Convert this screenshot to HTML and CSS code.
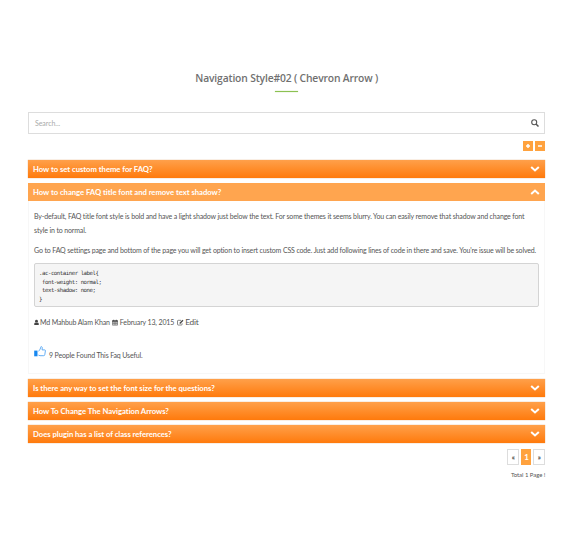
FILE: index.html
```html
<!DOCTYPE html>
<html lang="en">
<head>
<meta charset="utf-8">
<title>Navigation Style</title>
<link rel="stylesheet" href="styles.css">
</head>
<body>
<svg class="symbols" aria-hidden="true">
  <symbol id="down" viewBox="0 0 10 6"><path d="M1.2 1 5 4.5 8.8 1" fill="none" stroke="#fff" stroke-width="2"/></symbol>
  <symbol id="up" viewBox="0 0 10 6"><path d="M1.2 5 5 1.5 8.8 5" fill="none" stroke="#fff" stroke-width="2"/></symbol>
</svg>
<main class="page">
  <h1 class="title"><span>Navigation Style#02 ( Chevron Arrow )</span></h1>
  <div class="search">
    <span class="hint">Search...</span>
    <svg class="lens" viewBox="0 0 8 8"><circle cx="3.2" cy="3.2" r="2.5" fill="none" stroke="#555" stroke-width="1.1"/><path d="M5 5 7.5 7.5" stroke="#555" stroke-width="1.5"/></svg>
  </div>
  <div class="toggles">
    <span class="toggle"><svg viewBox="0 0 10 10"><path d="M5 3v4M3 5h4" stroke="#fff" stroke-width="1.5"/></svg></span>
    <span class="toggle"><svg viewBox="0 0 10 10"><path d="M3 5h4" stroke="#fff" stroke-width="1.5"/></svg></span>
  </div>
  <div class="bar"><span>How to set custom theme for FAQ?</span><svg class="chev"><use href="#down"/></svg></div>
  <div class="bar open"><span>How to change FAQ title font and remove text shadow?</span><svg class="chev"><use href="#up"/></svg></div>
  <section class="answer">
    <p>By-default, FAQ title font style is bold and have a light shadow just below the text. For some themes it seems blurry. You can easily remove that shadow and change font<br>style in to normal.</p>
    <p>Go to FAQ settings page and bottom of the page you will get option to insert custom CSS code. Just add following lines of code in there and save. You're issue will be solved.</p>
<pre class="code">.ac-container label{
 font-weight: normal;
 text-shadow: none;
}</pre>
    <div class="meta">
      <svg class="user" viewBox="0 0 6 7"><circle cx="3" cy="2" r="1.7" fill="#444"/><path d="M.3 6.6V5Q.3 3.5 1.5 3.4Q3 4.5 4.5 3.4Q5.7 3.5 5.7 5V6.6z" fill="#444"/></svg>
      <span class="author">Md Mahbub Alam Khan</span>
      <svg class="cal" viewBox="0 0 7 7"><path d="M.5 1.3h6v5.3h-6zM.5 3h6M.5 4.8h6M2.5 3v3.5M4.5 3v3.5" fill="none" stroke="#555" stroke-width=".7"/><path d="M.3 1.2h6.4v1.4H.3zM1.5.2h1v1.5h-1zM4.5.2h1v1.5h-1z" fill="#444"/></svg>
      <span class="date">February 13, 2015</span>
      <svg class="pen" viewBox="0 0 8 7"><path d="M4.6 1H1.4Q.6 1 .6 1.8V5.6Q.6 6.4 1.4 6.4H5Q5.8 6.4 5.8 5.6V4.4" fill="none" stroke="#555" stroke-width=".8"/><path d="M3.1 4.6 6.8.9" stroke="#444" stroke-width="1.5"/></svg>
      <span class="edit">Edit</span>
    </div>
    <div class="useful">
      <svg class="thumb" viewBox="0 0 12 11"><path d="M.2 4.6h3.3v5.7H.2z" fill="#1687f0"/><path d="M4.4 5.1Q6.5 4 6.6 1.7Q6.7.5 7.5.6Q8.7.8 8.1 3.9H10.7Q11.5 4 11.4 4.9L10.8 8.6Q10.6 9.7 9.7 9.7H6L4.4 9.1" fill="#fff" stroke="#3d9bf2" stroke-width=".8"/></svg>
      <span class="count">9 People Found This Faq Useful.</span>
    </div>
  </section>
  <div class="bar"><span>Is there any way to set the font size for the questions?</span><svg class="chev"><use href="#down"/></svg></div>
  <div class="bar"><span>How To Change The Navigation Arrows?</span><svg class="chev"><use href="#down"/></svg></div>
  <div class="bar"><span>Does plugin has a list of class references?</span><svg class="chev"><use href="#down"/></svg></div>
  <nav class="pager"><span class="pg">«</span><span class="pg current">1</span><span class="pg">»</span></nav>
  <div class="total"><span>Total 1 Page !</span></div>
</main>
</body>
</html>
```
FILE: styles.css
```css
* { box-sizing: border-box; }
body { margin: 0; background: #fff; color: #555; font: 7px/14px Lato, sans-serif; letter-spacing: -.142px; }
.symbols { position: absolute; width: 0; height: 0; }
.page { width: 517.4px; margin-left: 28px; padding-top: 70px; }
span { white-space: nowrap; }
.title { display: flex; flex-direction: column; align-items: center; height: 42px; margin: 0; font: 600 10.3px/16px "Open Sans", sans-serif; letter-spacing: -.15px; color: #707070; }
.title::after { content: ""; width: 23px; height: 1px; margin-top: 5px; background: #8cc152; box-shadow: 0 0 1px #8cc152; }
.search { display: flex; align-items: center; justify-content: space-between; height: 22px; padding: 0 5px 0 6px; border: 1px solid #ddd; }
.hint { color: #aaa; font-size: 7px; letter-spacing: -.05px; }
.lens { width: 8px; height: 8px; }
.toggles { display: flex; justify-content: flex-end; gap: 2px; margin: 7px 0 9px; height: 10px; }
.toggle { width: 10px; height: 10px; background: #ffa23e; }
.toggle svg { display: block; width: 10px; height: 10px; }
.bar { display: flex; align-items: center; justify-content: space-between; height: 18px; margin-bottom: 5px; padding: 0 5px; color: #fff; font-weight: 700; font-size: 7.7px; letter-spacing: -.03px; background: linear-gradient(#ffa04a, #ff7a0c); box-shadow: 0 0 1px #d99a60; }
.bar.open { margin-bottom: 0; background: #ffa54f; box-shadow: none; }
.chev { width: 10px; height: 6px; }
.answer { height: 173px; margin-bottom: 5px; padding: 8px 5px 0; border: 1px solid #f7f7f7; border-top: 0; }
.answer p { margin: 0 0 6px; white-space: nowrap; }
.code { height: 44px; margin: 0 0 8px; padding: 5px 4px; border: 1px solid #d4d4d4; border-radius: 2px; background: #f5f5f5; color: #333; font: 5.7px/8.6px "DejaVu Sans Mono", monospace; letter-spacing: -.45px; }
.meta { display: flex; align-items: center; height: 14px; }
.user { width: 5px; height: 7px; margin-right: 1px; }
.cal { width: 6px; height: 7px; margin: 0 2px; }
.pen { width: 7px; height: 7px; margin: 0 1px 0 3px; }
.edit { font-size: 8.3px; letter-spacing: -.2px; }
.useful { display: flex; margin-top: 17px; height: 16px; }
.thumb { width: 12px; height: 11px; margin: 0 3px 0 0; }
.count { margin-top: 2px; }
.pager { display: flex; justify-content: flex-end; gap: 2px; height: 16px; margin-top: 6px; }
.pg { width: 12px; border: 1px solid #ddd; text-align: center; color: #333; font-weight: 700; }
.current { width: 10px; border-color: #ffa23e; background: #ffa23e; color: #fff; font-size: 8px; }
.total { display: flex; justify-content: flex-end; margin-top: 3px; font-size: 6px; letter-spacing: -.05px; }
```
